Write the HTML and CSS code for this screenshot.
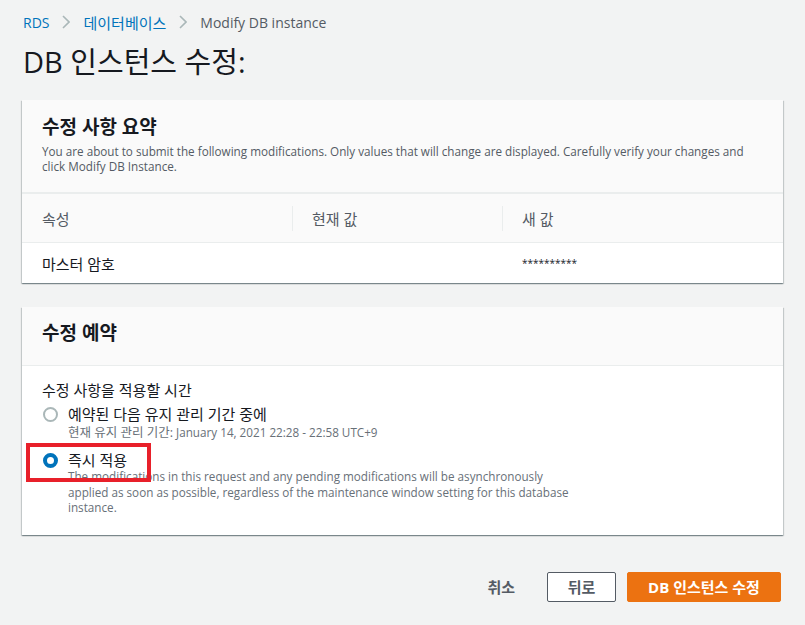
FILE: index.html
```html
<!DOCTYPE html>
<html lang="ko">
<head>
<meta charset="utf-8">
<link rel="stylesheet" href="styles.css">
</head>
<body>
<div class="page">
  <nav class="crumbs">
    <a class="crumb-link">RDS</a>
    <svg class="chev" width="8" height="14" viewBox="0 0 8 14"><path d="M1 1l6 6-6 6" fill="none" stroke="#aab7b8" stroke-width="1.6"/></svg>
    <a class="crumb-link ko">데이터베이스</a>
    <svg class="chev" width="8" height="14" viewBox="0 0 8 14"><path d="M1 1l6 6-6 6" fill="none" stroke="#aab7b8" stroke-width="1.6"/></svg>
    <span class="crumb-current">Modify DB instance</span>
  </nav>
  <h1 class="title">DB 인스턴스 수정:</h1>

  <section class="card">
    <div class="card-head">
      <h2 class="card-title">수정 사항 요약</h2>
      <p class="card-desc">You are about to submit the following modifications. Only values that will change are displayed. Carefully verify your changes and click Modify DB Instance.</p>
    </div>
    <div class="table">
      <div class="trow thead">
        <div class="cell c1">속성</div>
        <div class="cell c2"><span class="sep"></span>현재 값</div>
        <div class="cell c3"><span class="sep"></span>새 값</div>
      </div>
      <div class="trow tbody">
        <div class="cell c1">마스터 암호</div>
        <div class="cell c2"></div>
        <div class="cell c3 stars">**********</div>
      </div>
    </div>
  </section>

  <section class="card card2">
    <div class="card-head head2">
      <h2 class="card-title">수정 예약</h2>
    </div>
    <div class="card-body">
      <div class="field-label">수정 사항을 적용할 시간</div>
      <div class="option">
        <span class="radio"></span>
        <div class="opt-text">
          <div class="opt-label">예약된 다음 유지 관리 기간 중에</div>
          <div class="opt-desc"><span class="ko-sm">현재 유지 관리 기간:</span> January 14, 2021 22:28 - 22:58 UTC+9</div>
        </div>
      </div>
      <div class="option sel">
        <span class="radio on"></span>
        <div class="opt-text">
          <div class="opt-label">즉시 적용</div>
          <div class="opt-desc wide">The modifications in this request and any pending modifications will be asynchronously<br>applied as soon as possible, regardless of the maintenance window setting for this database<br>instance.</div>
        </div>
        <span class="highlight"></span>
      </div>
    </div>
  </section>

  <div class="actions">
    <button class="btn btn-link">취소</button>
    <button class="btn btn-normal">뒤로</button>
    <button class="btn btn-primary">DB 인스턴스 수정</button>
  </div>
</div>
</body>
</html>
```
FILE: styles.css
```css
* { box-sizing: border-box; }
html, body { margin: 0; padding: 0; }
body {
  background: #f2f3f3;
  font-family: "Open Sans", "Noto Sans CJK KR", sans-serif;
  color: #16191f;
  font-size: 14px;
}
.page { padding: 12px 22px 0 22px; }
.crumbs {
  display: flex;
  align-items: center;
  height: 20px;
  font-size: 14px;
  padding-left: 1px;
}
.crumb-link { color: #0073bb; }
.crumb-link.ko { font-size: 15px; }
.crumb-current { color: #545b64; }
.chev { margin: 0 13px 0 13px; }
.title {
  margin: 11px 0 19px 1px;
  font-size: 29px;
  font-weight: 400;
  line-height: 38px;
  color: #16191f;
}
.card {
  background: #fff;
  box-shadow: 0 1px 1px 0 rgba(0,28,36,.3), 1px 1px 1px 0 rgba(0,28,36,.15), -1px 1px 1px 0 rgba(0,28,36,.15);
}
.card-head {
  background: #fafafa;
  padding: 14px 20px 18px 20px;
  border-bottom: 2px solid #eaeded;
}
.card-title {
  margin: 0;
  font-size: 19px;
  font-weight: 700;
  line-height: 26px;
}
.card-desc {
  margin: 4px 0 0 0;
  font-size: 11.7px;
  line-height: 15px;
  color: #545b64;
}
.trow { display: flex; font-size: 15px; }
.thead {
  background: #fafafa;
  height: 49px;
  border-bottom: 1px solid #eaeded;
  color: #545b64;
}
.tbody { height: 40px; }
.cell {
  position: relative;
  display: flex;
  align-items: center;
  padding-left: 20px;
}
.c1 { width: 270px; }
.c2 { width: 210px; }
.c3 { flex: 1; }
.sep {
  position: absolute;
  left: 0;
  top: 12px;
  height: 25px;
  border-left: 1px solid #eaeded;
}
.stars { font-size: 10px; color: #16191f; }
.card2 { margin-top: 24px; }
.head2 { padding: 13px 20px 19px 20px; border-bottom: 1px solid #eaeded; }
.card-body { padding: 14px 20px 19px 20px; }
.field-label { line-height: 20px; margin-bottom: 4px; font-size: 15px; }
.option {
  position: relative;
  display: flex;
  align-items: flex-start;
}
.option.sel { margin-top: 9px; }
.radio {
  width: 15px;
  height: 15px;
  border-radius: 50%;
  border: 2px solid #aab7b8;
  margin: 3px 10px 0 1px;
  flex: none;
  background: #fff;
}
.radio.on { border: 4px solid #0073bb; }
.opt-label { line-height: 20px; font-size: 15px; }
.opt-desc {
  font-size: 11.7px;
  line-height: 16px;
  color: #687078;
}
.ko-sm { font-size: 12.5px; }
.opt-desc.wide { line-height: 15.5px; margin-top: -1px; }
.highlight {
  position: absolute;
  left: -16px;
  top: -7px;
  width: 125px;
  height: 39px;
  border: 4px solid #e8202a;
}
.actions {
  display: flex;
  justify-content: flex-end;
  gap: 11px;
  margin-top: 37px;
  padding-right: 2px;
}
.btn {
  height: 30px;
  font-family: inherit;
  font-size: 15px;
  font-weight: 700;
  border-radius: 2px;
  padding: 0 10px;
  cursor: pointer;
}
.btn-link { background: transparent; border: 1px solid transparent; color: #545b64; margin-right: 10px; }
.btn-normal { background: #fff; border: 1px solid #545b64; color: #545b64; width: 69px; }
.btn-primary { background: #ec7211; border: 1px solid #ec7211; color: #fff; width: 154px; }
```
